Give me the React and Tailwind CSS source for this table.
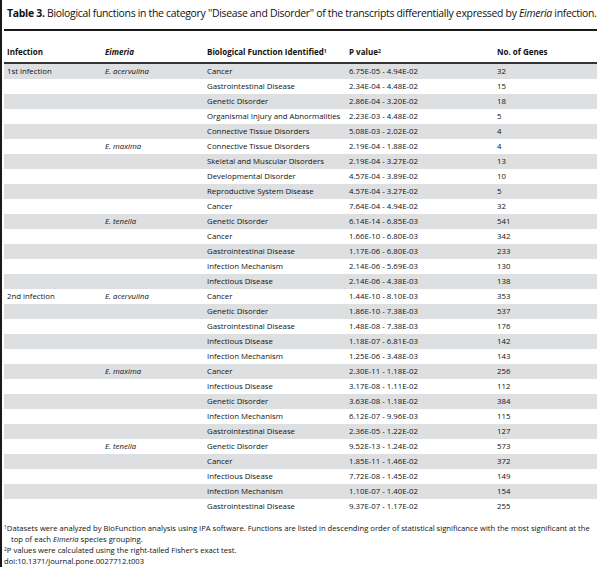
const rows = [
  ['1st infection', 'E. acervulina', 'Cancer', '6.75E-05 - 4.94E-02', '32'],
  ['', '', 'Gastrointestinal Disease', '2.34E-04 - 4.48E-02', '15'],
  ['', '', 'Genetic Disorder', '2.86E-04 - 3.20E-02', '18'],
  ['', '', 'Organismal Injury and Abnormalities', '2.23E-03 - 4.48E-02', '5'],
  ['', '', 'Connective Tissue Disorders', '5.08E-03 - 2.02E-02', '4'],
  ['', 'E. maxima', 'Connective Tissue Disorders', '2.19E-04 - 1.88E-02', '4'],
  ['', '', 'Skeletal and Muscular Disorders', '2.19E-04 - 3.27E-02', '13'],
  ['', '', 'Developmental Disorder', '4.57E-04 - 3.89E-02', '10'],
  ['', '', 'Reproductive System Disease', '4.57E-04 - 3.27E-02', '5'],
  ['', '', 'Cancer', '7.64E-04 - 4.94E-02', '32'],
  ['', 'E. tenella', 'Genetic Disorder', '6.14E-14 - 6.85E-03', '541'],
  ['', '', 'Cancer', '1.66E-10 - 6.80E-03', '342'],
  ['', '', 'Gastrointestinal Disease', '1.17E-06 - 6.80E-03', '233'],
  ['', '', 'Infection Mechanism', '2.14E-06 - 5.69E-03', '130'],
  ['', '', 'Infectious Disease', '2.14E-06 - 4.38E-03', '138'],
  ['2nd infection', 'E. acervulina', 'Cancer', '1.44E-10 - 8.10E-03', '353'],
  ['', '', 'Genetic Disorder', '1.86E-10 - 7.38E-03', '537'],
  ['', '', 'Gastrointestinal Disease', '1.48E-08 - 7.38E-03', '176'],
  ['', '', 'Infectious Disease', '1.18E-07 - 6.81E-03', '142'],
  ['', '', 'Infection Mechanism', '1.25E-06 - 3.48E-03', '143'],
  ['', 'E. maxima', 'Cancer', '2.30E-11 - 1.18E-02', '256'],
  ['', '', 'Infectious Disease', '3.17E-08 - 1.11E-02', '112'],
  ['', '', 'Genetic Disorder', '3.63E-08 - 1.18E-02', '384'],
  ['', '', 'Infection Mechanism', '6.12E-07 - 9.96E-03', '115'],
  ['', '', 'Gastrointestinal Disease', '2.36E-05 - 1.22E-02', '127'],
  ['', 'E. tenella', 'Genetic Disorder', '9.52E-13 - 1.24E-02', '573'],
  ['', '', 'Cancer', '1.85E-11 - 1.46E-02', '372'],
  ['', '', 'Infectious Disease', '7.72E-08 - 1.45E-02', '149'],
  ['', '', 'Infection Mechanism', '1.10E-07 - 1.40E-02', '154'],
  ['', '', 'Gastrointestinal Disease', '9.37E-07 - 1.17E-02', '255'],
]

const cols = 'grid grid-cols-[98px_102px_142px_148px_1fr]'

export default function App() {
  return (
    <div className="h-[567px] w-[600px] overflow-hidden border-l-2 border-[#1a1a1a] bg-white font-['Open_Sans',sans-serif] text-[#111]">
      <p className="whitespace-nowrap pl-[5px] pt-[6px] text-[10.45px] leading-[14px] tracking-[-0.3px]">
        <b>Table 3.</b> Biological functions in the category ''Disease and Disorder'' of the transcripts differentially expressed by <i>Eimeria</i> infection.
      </p>
      <div className="ml-[2px] mt-[9px] w-[593px] border-t-2 border-[#1a1a1a]">
        <div className={`${cols} h-[33px] items-end border-b-2 border-[#333] pb-[5px] text-[8px] font-bold leading-[10px]`}>
          <span className="pl-[3px]">Infection</span>
          <span className="pl-[3px] italic">Eimeria</span>
          <span className="pl-[3px]">Biological Function Identified<sup className="text-[5px]">1</sup></span>
          <span className="pl-[3px]">P value<sup className="text-[5px]">2</sup></span>
          <span className="pl-[3px]">No. of Genes</span>
        </div>
        {rows.map((r, i) => (
          <div
            key={i}
            className={`${cols} h-[15px] items-center whitespace-nowrap text-[7.8px] leading-[15px] ${i % 2 === 0 ? 'bg-[#dedfe1]' : 'bg-white'}`}
          >
            <span className="pl-[3px]">{r[0]}</span>
            <span className="pl-[3px] italic">{r[1]}</span>
            <span className="pl-[3px]">{r[2]}</span>
            <span className="pl-[3px]">{r[3]}</span>
            <span className="pl-[3px]">{r[4]}</span>
          </div>
        ))}
      </div>
      <div className="mt-[9px] pl-[2px] text-[7.65px] leading-[11px] whitespace-nowrap">
        <p>
          <sup className="text-[5px]">1</sup>Datasets were analyzed by BioFunction analysis using IPA software. Functions are listed in descending order of statistical significance with the most significant at the
        </p>
        <p className="pl-[7px]">
          top of each <i>Eimeria</i> species grouping.
        </p>
        <p>
          <sup className="text-[5px]">2</sup>P values were calculated using the right-tailed Fisher's exact test.
        </p>
        <p>doi:10.1371/journal.pone.0027712.t003</p>
      </div>
    </div>
  )
}
